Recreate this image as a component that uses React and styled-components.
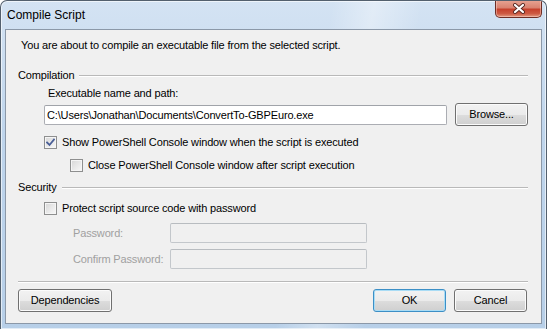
import React from "react";
import styled, { createGlobalStyle } from "styled-components";

const GlobalStyle = createGlobalStyle`
  html, body {
    margin: 0;
    padding: 0;
    background: #ffffff;
  }
  * {
    box-sizing: border-box;
  }
`;

const Checkbox = ({ checked }) => (
  <StyledBox>
    {checked && (
      <svg width="9" height="9" viewBox="0 0 9 9">
        <path
          d="M1 4.5 L3.5 7 L8 1.5"
          fill="none"
          stroke="#4a5f97"
          strokeWidth="1.8"
          strokeLinecap="square"
        />
      </svg>
    )}
  </StyledBox>
);

const CheckOption = ({ checked, indent, top = 10, children }) => (
  <StyledCheckRow $indent={indent} $top={top}>
    <Checkbox checked={checked} />
    <span>{children}</span>
  </StyledCheckRow>
);

const Section = ({ title, top = 17 }) => (
  <StyledSectionHead $top={top}>
    <span>{title}</span>
    <StyledRule />
  </StyledSectionHead>
);

const App = () => {
  return (
    <>
      <GlobalStyle />
      <StyledWindow>
        <StyledTitleBar>
          <StyledTitle>Compile Script</StyledTitle>
          <StyledClose>
            <svg width="14" height="11" viewBox="0 0 14 11">
              <path
                d="M3 2 L11 9 M11 2 L3 9"
                stroke="#5a2a24"
                strokeWidth="4"
                strokeLinecap="round"
              />
              <path
                d="M3 2 L11 9 M11 2 L3 9"
                stroke="#ffffff"
                strokeWidth="2.2"
                strokeLinecap="round"
              />
            </svg>
          </StyledClose>
        </StyledTitleBar>
        <StyledClient>
          <StyledIntro>
            You are about to compile an executable file from the selected script.
          </StyledIntro>

          <Section title="Compilation" />
          <StyledFieldLabel>Executable name and path:</StyledFieldLabel>
          <StyledPathRow>
            <StyledTextBox $width={403}>
              C:\Users\Jonathan\Documents\ConvertTo-GBPEuro.exe
            </StyledTextBox>
            <StyledButton $width={73}>Browse...</StyledButton>
          </StyledPathRow>
          <CheckOption checked indent={26}>
            Show PowerShell Console window when the script is executed
          </CheckOption>
          <CheckOption indent={52}>
            Close PowerShell Console window after script execution
          </CheckOption>

          <Section title="Security" top={9} />
          <CheckOption indent={26} top={8}>
            Protect script source code with password
          </CheckOption>
          <StyledPasswordGrid>
            <StyledDimLabel>Password:</StyledDimLabel>
            <StyledTextBox $width={197} $disabled />
            <StyledDimLabel>Confirm Password:</StyledDimLabel>
            <StyledTextBox $width={197} $disabled />
          </StyledPasswordGrid>

          <StyledFooterRule />
          <StyledButtonBar>
            <StyledButton $width={94}>Dependencies</StyledButton>
            <StyledSpacer />
            <StyledButton $width={73} $primary>
              OK
            </StyledButton>
            <StyledButton $width={73}>Cancel</StyledButton>
          </StyledButtonBar>
        </StyledClient>
      </StyledWindow>
    </>
  );
};

const StyledWindow = styled.div`
  width: 547px;
  height: 329px;
  border: 1px solid #53606e;
  border-bottom: none;
  border-radius: 7px 7px 0 0;
  padding: 0 4px 5px 4px;
  display: flex;
  flex-direction: column;
  overflow: hidden;
  background:
    linear-gradient(100deg, rgba(255, 255, 255, 0) 55%, rgba(255, 255, 255, 0.35) 62%, rgba(255, 255, 255, 0) 70%),
    linear-gradient(180deg, #d4e3f3 0%, #bfd5ec 40%, #b7cfe8 100%);
  box-shadow: inset 0 0 0 1px rgba(255, 255, 255, 0.6);
  font-family: "Liberation Sans", Arial, sans-serif;
  font-size: 11px;
  letter-spacing: -0.15px;
  color: #000000;
`;

const StyledTitleBar = styled.div`
  height: 28px;
  display: flex;
  align-items: flex-start;
  justify-content: space-between;
  flex-shrink: 0;
`;

const StyledTitle = styled.div`
  margin: 7px 0 0 2px;
  font-size: 12px;
  line-height: 15px;
  letter-spacing: 0;
  color: #000000;
`;

const StyledClose = styled.div`
  width: 47px;
  height: 18px;
  margin-top: -1px;
  border: 1px solid #6e2e25;
  border-top: none;
  border-radius: 0 0 5px 5px;
  display: flex;
  align-items: center;
  justify-content: center;
  background: linear-gradient(
    180deg,
    #e8a594 0%,
    #d98270 45%,
    #c6412c 55%,
    #cd5a43 80%,
    #e39a82 100%
  );
  box-shadow: inset 0 0 0 1px rgba(255, 220, 210, 0.45);
`;

const StyledClient = styled.div`
  flex: 1;
  border: 1px solid #8b98a8;
  background: #f0f0f0;
  padding: 9px 13px 0 12px;
  display: flex;
  flex-direction: column;
`;

const StyledIntro = styled.p`
  margin: 0 0 0 3px;
  line-height: 13px;
`;

const StyledSectionHead = styled.div`
  margin-top: ${(p) => p.$top}px;
  height: 13px;
  display: flex;
  align-items: center;
  gap: 5px;
  line-height: 13px;
`;

const StyledRule = styled.div`
  flex: 1;
  border-top: 1px solid #b9b9b9;
  border-bottom: 1px solid #ffffff;
`;

const StyledFieldLabel = styled.div`
  margin: 5px 0 0 30px;
  line-height: 13px;
`;

const StyledPathRow = styled.div`
  margin: 3px 0 0 26px;
  display: flex;
  align-items: center;
  gap: 8px;
`;

const StyledTextBox = styled.div`
  width: ${(p) => p.$width}px;
  height: 20px;
  border: 1px solid ${(p) => (p.$disabled ? "#c3c7cb" : "#abadb3")};
  border-top-color: ${(p) => (p.$disabled ? "#b8bcc0" : "#a0a3a9")};
  border-radius: 2px;
  background: ${(p) => (p.$disabled ? "#f0f0f0" : "#ffffff")};
  padding: 0 2px;
  line-height: 18px;
  white-space: nowrap;
  overflow: hidden;
`;

const StyledButton = styled.div`
  width: ${(p) => p.$width}px;
  height: 23px;
  border: 1px solid ${(p) => (p.$primary ? "#3c8fc6" : "#707070")};
  border-radius: 3px;
  display: flex;
  align-items: center;
  justify-content: center;
  line-height: 13px;
  background: linear-gradient(180deg, #f2f2f2 0%, #ebebeb 50%, #dddddd 51%, #cfcfcf 100%);
  box-shadow: inset 0 0 0 1px ${(p) => (p.$primary ? "#a9dcf5" : "#fbfbfb")};
  flex-shrink: 0;
`;

const StyledCheckRow = styled.div`
  margin: ${(p) => p.$top}px 0 0 ${(p) => p.$indent}px;
  height: 13px;
  display: flex;
  align-items: center;
  gap: 5px;
  line-height: 13px;
`;

const StyledBox = styled.span`
  width: 13px;
  height: 13px;
  border: 1px solid #8e8f8f;
  display: flex;
  align-items: center;
  justify-content: center;
  background: linear-gradient(135deg, #d6d6d6 0%, #e8e8e8 50%, #f8f8f8 100%);
  box-shadow: inset 0 0 0 1px #f5f5f5;
  flex-shrink: 0;
`;

const StyledPasswordGrid = styled.div`
  margin: 8px 0 0 55px;
  display: grid;
  grid-template-columns: 97px 197px;
  row-gap: 6px;
  align-items: center;
`;

const StyledDimLabel = styled.span`
  color: #a0a0a0;
  line-height: 13px;
`;

const StyledFooterRule = styled.div`
  margin-top: 12px;
  border-top: 1px solid #b9b9b9;
  border-bottom: 1px solid #ffffff;
`;

const StyledButtonBar = styled.div`
  margin: 6px 1px 0 0;
  display: flex;
  gap: 8px;
`;

const StyledSpacer = styled.div`
  flex: 1;
`;

export default App;
